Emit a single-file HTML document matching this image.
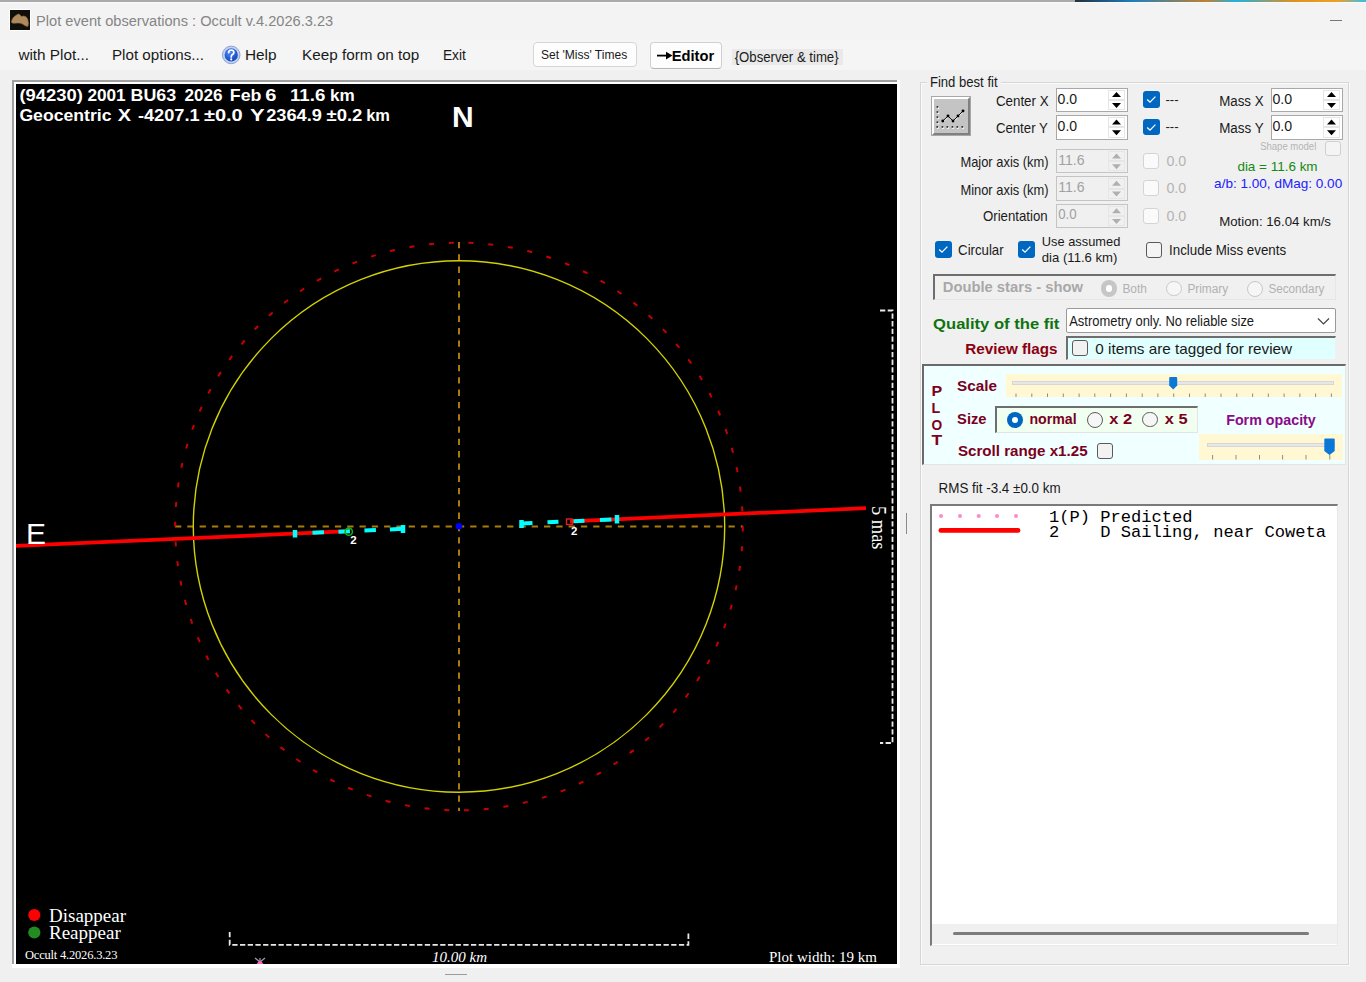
<!DOCTYPE html>
<html><head><meta charset="utf-8">
<style>
html,body{margin:0;padding:0;}
body{width:1366px;height:982px;overflow:hidden;position:relative;background:#f0f0f0;font-family:"Liberation Sans",sans-serif;color:#000;}
.a{position:absolute;}
</style></head><body>
<div class="a" style="left:0px;top:0px;width:1366px;height:40px;background:#f3f3f3;"></div>
<div class="a" style="left:0px;top:0px;width:1075px;height:1.5px;background:#aaaaaa;"></div>
<div class="a" style="left:0px;top:1.5px;width:1366px;height:1.0px;background:#fafafa;"></div>
<div class="a" style="left:1075px;top:0px;width:291px;height:2px;background:linear-gradient(90deg,#203040,#1f7fc0 20%,#c08030 45%,#20b0e0 55%,#e09020 75%,#f0a020 90%,#30c0f0);"></div>
<div class="a" style="left:9px;top:9px;width:22px;height:22px;background:#fff;"></div>
<div class="a" style="left:10px;top:10px;width:20px;height:20px;background:#100e0a;"></div>
<svg class="a" style="left:10px;top:10px" width="20" height="20"><path d="M1.3 11.5 L3 7.8 L5.7 5.4 L8.4 4 L10 4.8 L11.2 6.6 L13.3 6 L15.8 6.6 L17.6 8.8 L18.5 13.3 L17.9 16.4 L15.8 16.1 L13.3 14.6 L10.9 13.3 L7.8 13 L4.2 13.3 L2 13Z" fill="#ad895c" stroke="#8a6a45" stroke-width="0.6" stroke-linejoin="round"/></svg>
<div class="a" style="left:1330px;top:20px;width:12px;height:1px;background:#777;"></div>
<div class="a" style="left:0px;top:40px;width:1366px;height:30px;background:#f5f5f5;"></div>
<svg class="a" style="left:221px;top:45px" width="20" height="20"><defs><radialGradient id="hg" cx="0.4" cy="0.3" r="0.8"><stop offset="0" stop-color="#4d8dff"/><stop offset="1" stop-color="#0a3cb0"/></radialGradient></defs><circle cx="10.2" cy="9.9" r="8.8" fill="#c4d0ee" stroke="#8ea4d6" stroke-width="1"/><circle cx="10.2" cy="9.9" r="6.6" fill="url(#hg)"/><path d="M7.6 7.6 Q7.8 5 10.3 5 Q12.9 5.1 12.9 7.4 Q12.9 8.8 11.2 9.8 Q10.2 10.5 10.2 12" stroke="#fff" stroke-width="1.7" fill="none" stroke-linecap="round"/><circle cx="10.2" cy="14.4" r="1.05" fill="#fff"/></svg>
<div class="a" style="left:533px;top:42px;width:104px;height:24.5px;box-sizing:border-box;background:#fdfdfd;border:1px solid #d6d6d6;border-radius:4px;"></div>
<div class="a" style="left:649.5px;top:41.5px;width:72.5px;height:27.5px;box-sizing:border-box;background:#fdfdfd;border:1px solid #d0d0d0;border-bottom-color:#b4b4b4;border-radius:4px;"></div>
<div class="a" style="left:731.5px;top:49px;width:111.5px;height:15.599999999999994px;background:#e9e9e9;"></div>
<svg class="a" style="left:655px;top:49px" width="20" height="14"><path d="M2 6.6 H15" stroke="#000" stroke-width="1.8"/><path d="M11 2.8 L17.5 6.6 L11 10.4Z" fill="#000"/></svg>
<div class="a" style="left:12px;top:80px;width:888px;height:887.5px;background:#fff;"></div>
<div class="a" style="left:12px;top:80px;width:885px;height:884px;background:#a0a0a0;"></div>
<div class="a" style="left:14px;top:82px;width:883px;height:882px;background:#fff;"></div>
<div class="a" style="left:16px;top:84px;width:881px;height:880px;background:#000;"></div>
<svg class="a" style="left:16px;top:84px;" width="881" height="880" viewBox="16 84 881 880">
<g fill="none">
<!-- crosshair -->
<line x1="175" y1="526.5" x2="743" y2="526.5" stroke="#aa7a0c" stroke-width="2" stroke-dasharray="6.3 6"/>
<line x1="459" y1="242" x2="459" y2="811" stroke="#aa7a0c" stroke-width="2" stroke-dasharray="6.3 6"/>
<!-- yellow circle -->
<circle cx="459" cy="526.5" r="265.7" stroke="#d2d200" stroke-width="1.4"/>
<!-- red dashed circle -->
<circle cx="459" cy="526.5" r="283.8" stroke="#c80000" stroke-width="2" stroke-dasharray="5 14.8"/>
<!-- chord red -->
<line x1="15" y1="546" x2="349" y2="531.2" stroke="#ff0000" stroke-width="3.7"/>
<line x1="570" y1="521.3" x2="866" y2="508.2" stroke="#ff0000" stroke-width="3.7"/>
<!-- cyan error dashes left -->
<line x1="295" y1="533.6" x2="404" y2="528.8" stroke="#00ffff" stroke-width="4" stroke-dasharray="0 17.5 11.5 14.5 11.5 14.5 11.5 14 13"/>
<line x1="295" y1="530" x2="295" y2="537.5" stroke="#00ffff" stroke-width="4.5"/>
<line x1="403" y1="525" x2="403" y2="533" stroke="#00ffff" stroke-width="4.5"/>
<!-- cyan right -->
<line x1="521" y1="523.5" x2="617" y2="519.3" stroke="#00ffff" stroke-width="4" stroke-dasharray="11.5 15 11 15 11 15.5 11.5 20"/>
<line x1="521.5" y1="520" x2="521.5" y2="528" stroke="#00ffff" stroke-width="4.5"/>
<line x1="617" y1="515" x2="617" y2="523.5" stroke="#00ffff" stroke-width="4.5"/>
<!-- markers -->
<circle cx="348.8" cy="531.7" r="3.6" stroke="#10b010" stroke-width="1.6"/>
<rect x="566.5" y="519" width="6" height="5.5" stroke="#e02020" stroke-width="1.4"/>
<circle cx="459" cy="526.3" r="3.3" fill="#0000ff"/>
<!-- right scale bar -->
<path d="M880 310.5 H892.5 V743 H880" stroke="#e8e8e8" stroke-width="1.8" stroke-dasharray="5.3 2.4"/>
<!-- bottom scale bar -->
<path d="M229.7 932 V944.8 H688.4 V932" stroke="#e8e8e8" stroke-width="1.8" stroke-dasharray="5.3 2.4"/>
<!-- legend dots -->
<circle cx="34.3" cy="915" r="6.1" fill="#ff0000"/>
<circle cx="34.3" cy="932.5" r="6.1" fill="#228b22"/>
<!-- pink star -->
<g stroke="#a0a0b0" stroke-width="1.2"><line x1="255" y1="958" x2="265" y2="966"/><line x1="265" y1="958" x2="255" y2="966"/><line x1="260" y1="958" x2="260" y2="966"/></g>
<circle cx="260" cy="963.5" r="2.5" fill="#ff60c0"/>
</g>
<g fill="#fff" font-family="Liberation Sans" style="white-space:pre">
<text x="19.4" y="101" font-size="16.5" font-weight="bold" textLength="63.5" lengthAdjust="spacingAndGlyphs">(94230)</text>
<text x="87.4" y="101" font-size="16.5" font-weight="bold" textLength="38.3" lengthAdjust="spacingAndGlyphs">2001</text>
<text x="130.5" y="101" font-size="16.5" font-weight="bold" textLength="45.7" lengthAdjust="spacingAndGlyphs">BU63</text>
<text x="184.4" y="101" font-size="16.5" font-weight="bold" textLength="38.2" lengthAdjust="spacingAndGlyphs">2026</text>
<text x="229.8" y="101" font-size="16.5" font-weight="bold" textLength="31.6" lengthAdjust="spacingAndGlyphs">Feb</text>
<text x="265.2" y="101" font-size="16.5" font-weight="bold" textLength="11.2" lengthAdjust="spacingAndGlyphs">6</text>
<text x="290.0" y="101" font-size="16.5" font-weight="bold" textLength="35.3" lengthAdjust="spacingAndGlyphs">11.6</text>
<text x="330.0" y="101" font-size="16.5" font-weight="bold" textLength="24.8" lengthAdjust="spacingAndGlyphs">km</text>
<text x="19.4" y="121" font-size="16.5" font-weight="bold" textLength="92.1" lengthAdjust="spacingAndGlyphs">Geocentric</text>
<text x="117.7" y="121" font-size="16.5" font-weight="bold" textLength="13.3" lengthAdjust="spacingAndGlyphs">X</text>
<text x="137.9" y="121" font-size="16.5" font-weight="bold" textLength="61.8" lengthAdjust="spacingAndGlyphs">-4207.1</text>
<text x="203.9" y="121" font-size="16.5" font-weight="bold" textLength="38.9" lengthAdjust="spacingAndGlyphs">±0.0</text>
<text x="250.0" y="121" font-size="16.5" font-weight="bold" textLength="14.7" lengthAdjust="spacingAndGlyphs">Y</text>
<text x="266.2" y="121" font-size="16.5" font-weight="bold" textLength="55.7" lengthAdjust="spacingAndGlyphs">2364.9</text>
<text x="326.5" y="121" font-size="16.5" font-weight="bold" textLength="35.9" lengthAdjust="spacingAndGlyphs">±0.2</text>
<text x="366.2" y="121" font-size="16.5" font-weight="bold" textLength="23.8" lengthAdjust="spacingAndGlyphs">km</text>
<text x="452" y="126.5" font-size="30" font-weight="bold">N</text>
<text x="26" y="544" font-size="30">E</text>
<text x="350.3" y="544" font-size="11.5" font-weight="bold">2</text>
<text x="571" y="535" font-size="11.5" font-weight="bold">2</text>
</g>
<g fill="#fff" font-family="Liberation Serif" style="white-space:pre">
<text x="49" y="921.5" font-size="19">Disappear</text>
<text x="49" y="938.7" font-size="19">Reappear</text>
<text x="25" y="958.9" font-size="12.5" letter-spacing="-0.2">Occult 4.2026.3.23</text>
<text x="432" y="961.7" font-size="15" font-style="italic">10.00 km</text>
<text x="769" y="961.5" font-size="15">Plot width: 19 km</text>
<text transform="translate(872.4 506) rotate(90)" font-size="20.5" textLength="43.5" lengthAdjust="spacingAndGlyphs">5 mas</text>
</g>
</svg>

<div class="a" style="left:906px;top:513px;width:1px;height:20.5px;background:#8a8a8a;"></div>
<div class="a" style="left:445px;top:974px;width:21.5px;height:1px;background:#9a9a9a;"></div>
<div class="a" style="left:920px;top:82px;width:429px;height:883px;box-sizing:border-box;border:1px solid #d6d6d6;box-shadow:inset 1px 1px 0 #fafafa, 1px 1px 0 #fafafa;"></div>
<div class="a" style="left:927px;top:74px;width:74px;height:16px;background:#f0f0f0;"></div>
<div class="a" style="left:930.5px;top:96px;width:40.0px;height:40px;background:#a8a8a8;"></div>
<div class="a" style="left:931.5px;top:97px;width:38.0px;height:38px;box-sizing:border-box;background:#c4c4c4;border-top:2.5px solid #fff;border-left:2.5px solid #fff;border-right:2.5px solid #808080;border-bottom:2.5px solid #808080;"></div>
<svg class="a" style="left:930px;top:96px" width="40" height="40"><g fill="#fff"><rect x="7.6" y="11.299999999999999" width="1.6" height="1.6"/><rect x="7.6" y="16.400000000000002" width="1.6" height="1.6"/><rect x="7.6" y="21.5" width="1.6" height="1.6"/><rect x="7.6" y="26.6" width="1.6" height="1.6"/><rect x="7.0" y="31.3" width="1.6" height="1.6"/><rect x="12.2" y="31.3" width="1.6" height="1.6"/><rect x="17.1" y="31.3" width="1.6" height="1.6"/><rect x="22.200000000000003" y="31.3" width="1.6" height="1.6"/><rect x="27.1" y="31.3" width="1.6" height="1.6"/><rect x="32.1" y="31.3" width="1.6" height="1.6"/></g><g fill="#222"><rect x="6.6" y="10.1" width="1.6" height="1.6"/><rect x="6.6" y="15.200000000000001" width="1.6" height="1.6"/><rect x="6.6" y="20.299999999999997" width="1.6" height="1.6"/><rect x="6.6" y="25.4" width="1.6" height="1.6"/><rect x="6.4" y="30.1" width="1.6" height="1.6"/><rect x="11.6" y="30.1" width="1.6" height="1.6"/><rect x="16.5" y="30.1" width="1.6" height="1.6"/><rect x="21.6" y="30.1" width="1.6" height="1.6"/><rect x="26.5" y="30.1" width="1.6" height="1.6"/><rect x="31.5" y="30.1" width="1.6" height="1.6"/></g><path d="M13.3 25.8 L18.5 20.8 L23.5 25.8 L28.5 20.8 L33.5 15.8" stroke="#fff" stroke-width="1" fill="none" opacity="0.7"/><path d="M12.8 25 L18 20 L23 25 L28 20 L33 15" stroke="#111" stroke-width="1" fill="none"/><g fill="#000"><circle cx="12.8" cy="25" r="1.45"/><circle cx="18" cy="20" r="1.45"/><circle cx="23" cy="25" r="1.45"/><circle cx="28" cy="20" r="1.45"/><circle cx="33" cy="15" r="1.45"/></g></svg>
<div class="a" style="left:1055.5px;top:87.5px;width:72.5px;height:24.799999999999997px;box-sizing:border-box;border:1px solid #a8a8a8;background:#fff;"></div><div class="a" style="left:1108px;top:89.5px;width:17px;height:10.400000000000006px;box-sizing:border-box;border:1px solid #e6e6e6;background:#fff;"></div><div class="a" style="left:1108px;top:99.9px;width:17px;height:10.399999999999991px;box-sizing:border-box;border:1px solid #e6e6e6;background:#fff;"></div><svg class="a" style="left:0;top:0" width="1366" height="982"><path d="M1112.0 96.9 L1116.5 91.9 L1121.0 96.9Z M1112.0 102.9 L1116.5 107.9 L1121.0 102.9Z" fill="#000"/></svg>
<div class="a" style="left:1055.5px;top:115px;width:72.5px;height:24.69999999999999px;box-sizing:border-box;border:1px solid #a8a8a8;background:#fff;"></div><div class="a" style="left:1108px;top:117px;width:17px;height:10.349999999999994px;box-sizing:border-box;border:1px solid #e6e6e6;background:#fff;"></div><div class="a" style="left:1108px;top:127.35px;width:17px;height:10.349999999999994px;box-sizing:border-box;border:1px solid #e6e6e6;background:#fff;"></div><svg class="a" style="left:0;top:0" width="1366" height="982"><path d="M1112.0 124.4 L1116.5 119.4 L1121.0 124.4Z M1112.0 130.3 L1116.5 135.3 L1121.0 130.3Z" fill="#000"/></svg>
<div class="a" style="left:1270.5px;top:87.5px;width:72.5px;height:24.799999999999997px;box-sizing:border-box;border:1px solid #a8a8a8;background:#fff;"></div><div class="a" style="left:1323px;top:89.5px;width:17px;height:10.400000000000006px;box-sizing:border-box;border:1px solid #e6e6e6;background:#fff;"></div><div class="a" style="left:1323px;top:99.9px;width:17px;height:10.399999999999991px;box-sizing:border-box;border:1px solid #e6e6e6;background:#fff;"></div><svg class="a" style="left:0;top:0" width="1366" height="982"><path d="M1327.0 96.9 L1331.5 91.9 L1336.0 96.9Z M1327.0 102.9 L1331.5 107.9 L1336.0 102.9Z" fill="#000"/></svg>
<div class="a" style="left:1270.5px;top:115px;width:72.5px;height:24.69999999999999px;box-sizing:border-box;border:1px solid #a8a8a8;background:#fff;"></div><div class="a" style="left:1323px;top:117px;width:17px;height:10.349999999999994px;box-sizing:border-box;border:1px solid #e6e6e6;background:#fff;"></div><div class="a" style="left:1323px;top:127.35px;width:17px;height:10.349999999999994px;box-sizing:border-box;border:1px solid #e6e6e6;background:#fff;"></div><svg class="a" style="left:0;top:0" width="1366" height="982"><path d="M1327.0 124.4 L1331.5 119.4 L1336.0 124.4Z M1327.0 130.3 L1331.5 135.3 L1336.0 130.3Z" fill="#000"/></svg>
<div class="a" style="left:1055.5px;top:149.2px;width:72.5px;height:24.30000000000001px;box-sizing:border-box;border:1px solid #c4c4c4;background:#f0f0f0;"></div><div class="a" style="left:1108px;top:151.2px;width:17px;height:10.150000000000006px;box-sizing:border-box;border:1px solid #e6e6e6;background:#f0f0f0;"></div><div class="a" style="left:1108px;top:161.35px;width:17px;height:10.150000000000006px;box-sizing:border-box;border:1px solid #e6e6e6;background:#f0f0f0;"></div><svg class="a" style="left:0;top:0" width="1366" height="982"><path d="M1112.0 158.5 L1116.5 153.5 L1121.0 158.5Z M1112.0 164.2 L1116.5 169.2 L1121.0 164.2Z" fill="#b0b0b0"/></svg>
<div class="a" style="left:1055.5px;top:176.4px;width:72.5px;height:24.299999999999983px;box-sizing:border-box;border:1px solid #c4c4c4;background:#f0f0f0;"></div><div class="a" style="left:1108px;top:178.4px;width:17px;height:10.150000000000006px;box-sizing:border-box;border:1px solid #e6e6e6;background:#f0f0f0;"></div><div class="a" style="left:1108px;top:188.55px;width:17px;height:10.149999999999977px;box-sizing:border-box;border:1px solid #e6e6e6;background:#f0f0f0;"></div><svg class="a" style="left:0;top:0" width="1366" height="982"><path d="M1112.0 185.7 L1116.5 180.7 L1121.0 185.7Z M1112.0 191.4 L1116.5 196.4 L1121.0 191.4Z" fill="#b0b0b0"/></svg>
<div class="a" style="left:1055.5px;top:204px;width:72.5px;height:24.400000000000006px;box-sizing:border-box;border:1px solid #c4c4c4;background:#f0f0f0;"></div><div class="a" style="left:1108px;top:206px;width:17px;height:10.199999999999989px;box-sizing:border-box;border:1px solid #e6e6e6;background:#f0f0f0;"></div><div class="a" style="left:1108px;top:216.2px;width:17px;height:10.200000000000017px;box-sizing:border-box;border:1px solid #e6e6e6;background:#f0f0f0;"></div><svg class="a" style="left:0;top:0" width="1366" height="982"><path d="M1112.0 213.3 L1116.5 208.3 L1121.0 213.3Z M1112.0 219.1 L1116.5 224.1 L1121.0 219.1Z" fill="#b0b0b0"/></svg>
<div class="a" style="left:1143px;top:91.2px;width:16.5px;height:16.5px;background:#0067c0;border-radius:3px;"></div><svg class="a" style="left:1143px;top:91.2px" width="16.5" height="16.5"><path d="M4.2 8.6 L7 11.2 L12.4 5.6" stroke="#fff" stroke-width="1.3" fill="none"/></svg>
<div class="a" style="left:1143px;top:118.5px;width:16.5px;height:16.5px;background:#0067c0;border-radius:3px;"></div><svg class="a" style="left:1143px;top:118.5px" width="16.5" height="16.5"><path d="M4.2 8.6 L7 11.2 L12.4 5.6" stroke="#fff" stroke-width="1.3" fill="none"/></svg>
<div class="a" style="left:1325px;top:140.8px;width:15.5px;height:15.5px;box-sizing:border-box;border:1px solid #d0d0d0;background:#f4f4f4;border-radius:3px;"></div>
<div class="a" style="left:1143px;top:152.9px;width:15.700000000000045px;height:15.699999999999989px;box-sizing:border-box;border:1px solid #d4d4d4;background:#fafafa;border-radius:3px;"></div>
<div class="a" style="left:1143px;top:180.4px;width:15.700000000000045px;height:15.699999999999989px;box-sizing:border-box;border:1px solid #d4d4d4;background:#fafafa;border-radius:3px;"></div>
<div class="a" style="left:1143px;top:208.2px;width:15.700000000000045px;height:15.699999999999989px;box-sizing:border-box;border:1px solid #d4d4d4;background:#fafafa;border-radius:3px;"></div>
<div class="a" style="left:935.3px;top:241px;width:16.5px;height:16.5px;background:#0067c0;border-radius:3px;"></div><svg class="a" style="left:935.3px;top:241px" width="16.5" height="16.5"><path d="M4.2 8.6 L7 11.2 L12.4 5.6" stroke="#fff" stroke-width="1.3" fill="none"/></svg>
<div class="a" style="left:1018px;top:241px;width:16.5px;height:16.5px;background:#0067c0;border-radius:3px;"></div><svg class="a" style="left:1018px;top:241px" width="16.5" height="16.5"><path d="M4.2 8.6 L7 11.2 L12.4 5.6" stroke="#fff" stroke-width="1.3" fill="none"/></svg>
<div class="a" style="left:1145.5px;top:241.5px;width:16.0px;height:16.0px;box-sizing:border-box;border:1px solid #5a5a5a;background:#f4f4f4;border-radius:3px;"></div>
<div class="a" style="left:933px;top:274px;width:403px;height:26px;box-sizing:border-box;border-top:2px solid #6e6e6e;border-left:2px solid #6e6e6e;border-right:1px solid #e6e6e6;border-bottom:1px solid #e6e6e6;background:#f0f0f0;"></div>
<div class="a" style="left:1100.7px;top:280.35px;width:16.299999999999955px;height:16.30000000000001px;box-sizing:border-box;border-radius:50%;background:#c6c6c6;"></div><div class="a" style="left:1105.7px;top:285.35px;width:6.2999999999999545px;height:6.300000000000011px;border-radius:50%;background:#fff;"></div>
<div class="a" style="left:1166px;top:280.65px;width:15.700000000000045px;height:15.699999999999989px;box-sizing:border-box;border-radius:50%;border:1px solid #c8c8c8;background:#f6f6f6;"></div>
<div class="a" style="left:1247px;top:280.5px;width:16px;height:16.0px;box-sizing:border-box;border-radius:50%;border:1px solid #c8c8c8;background:#f6f6f6;"></div>
<div class="a" style="left:1065.8px;top:308.2px;width:270.70000000000005px;height:24.80000000000001px;box-sizing:border-box;background:#fff;border:1px solid #9a9a9a;border-radius:2px;"></div>
<svg class="a" style="left:1316px;top:314px" width="16" height="14"><path d="M2 4.5 L7.5 10 L13 4.5" stroke="#444" stroke-width="1.2" fill="none"/></svg>
<div class="a" style="left:1066px;top:335.6px;width:270px;height:24.0px;box-sizing:border-box;border-top:2px solid #6e6e6e;border-left:2px solid #6e6e6e;border-right:1px solid #f0f0f0;border-bottom:1px solid #f0f0f0;background:#e0ffff;"></div>
<div class="a" style="left:1072.2px;top:340.4px;width:15.599999999999909px;height:15.600000000000023px;box-sizing:border-box;border:1px solid #5a5a5a;background:#f2f2f2;border-radius:3px;"></div>
<div class="a" style="left:922px;top:363.5px;width:424px;height:101.30000000000001px;box-sizing:border-box;border-top:2px solid #6a6a6a;border-left:2px solid #6a6a6a;border-right:1px solid #e4e4e4;border-bottom:1px solid #e4e4e4;background:#f0ffff;"></div>
<div class="a" style="left:1006px;top:374.2px;width:336.20000000000005px;height:23.19999999999999px;background:#fff8d2;"></div><div class="a" style="left:1012px;top:381px;width:322px;height:4px;box-sizing:border-box;border:1px solid #d6d6d6;background:#e7e7e7;"></div><svg class="a" style="left:0;top:0" width="1366" height="982"><line x1="1016.0" y1="393.5" x2="1016.0" y2="397" stroke="#8c8c8c" stroke-width="1"/><line x1="1031.8" y1="393.5" x2="1031.8" y2="397" stroke="#8c8c8c" stroke-width="1"/><line x1="1047.5" y1="393.5" x2="1047.5" y2="397" stroke="#8c8c8c" stroke-width="1"/><line x1="1063.3" y1="393.5" x2="1063.3" y2="397" stroke="#8c8c8c" stroke-width="1"/><line x1="1079.1" y1="393.5" x2="1079.1" y2="397" stroke="#8c8c8c" stroke-width="1"/><line x1="1094.8" y1="393.5" x2="1094.8" y2="397" stroke="#8c8c8c" stroke-width="1"/><line x1="1110.6" y1="393.5" x2="1110.6" y2="397" stroke="#8c8c8c" stroke-width="1"/><line x1="1126.4" y1="393.5" x2="1126.4" y2="397" stroke="#8c8c8c" stroke-width="1"/><line x1="1142.2" y1="393.5" x2="1142.2" y2="397" stroke="#8c8c8c" stroke-width="1"/><line x1="1157.9" y1="393.5" x2="1157.9" y2="397" stroke="#8c8c8c" stroke-width="1"/><line x1="1173.7" y1="393.5" x2="1173.7" y2="397" stroke="#8c8c8c" stroke-width="1"/><line x1="1189.5" y1="393.5" x2="1189.5" y2="397" stroke="#8c8c8c" stroke-width="1"/><line x1="1205.2" y1="393.5" x2="1205.2" y2="397" stroke="#8c8c8c" stroke-width="1"/><line x1="1221.0" y1="393.5" x2="1221.0" y2="397" stroke="#8c8c8c" stroke-width="1"/><line x1="1236.8" y1="393.5" x2="1236.8" y2="397" stroke="#8c8c8c" stroke-width="1"/><line x1="1252.6" y1="393.5" x2="1252.6" y2="397" stroke="#8c8c8c" stroke-width="1"/><line x1="1268.3" y1="393.5" x2="1268.3" y2="397" stroke="#8c8c8c" stroke-width="1"/><line x1="1284.1" y1="393.5" x2="1284.1" y2="397" stroke="#8c8c8c" stroke-width="1"/><line x1="1299.9" y1="393.5" x2="1299.9" y2="397" stroke="#8c8c8c" stroke-width="1"/><line x1="1315.6" y1="393.5" x2="1315.6" y2="397" stroke="#8c8c8c" stroke-width="1"/><line x1="1331.4" y1="393.5" x2="1331.4" y2="397" stroke="#8c8c8c" stroke-width="1"/><path d="M1169.2 378.0 Q1169.2 377.0 1170.2 377.0 H1176.2 Q1177.2 377.0 1177.2 378.0 V385.6 L1173.2 389.6 L1169.2 385.6Z" fill="#0a78d6"/></svg>
<div class="a" style="left:994.7px;top:405.9px;width:203.0px;height:27.400000000000034px;box-sizing:border-box;border-top:2px solid #6e6e6e;border-left:2px solid #6e6e6e;border-right:1px solid #e4e4e4;border-bottom:1px solid #e4e4e4;background:#f0fff0;"></div>
<div class="a" style="left:1006.8px;top:411.5px;width:16.200000000000045px;height:16.19999999999999px;box-sizing:border-box;border-radius:50%;background:#0067c0;"></div><div class="a" style="left:1011.8px;top:416.5px;width:6.2000000000000455px;height:6.199999999999989px;border-radius:50%;background:#fff;"></div>
<div class="a" style="left:1087px;top:411.6px;width:16px;height:16.0px;box-sizing:border-box;border-radius:50%;border:1px solid #5c5c5c;background:#f6f6f6;"></div>
<div class="a" style="left:1142px;top:411.70000000000005px;width:15.799999999999955px;height:15.800000000000011px;box-sizing:border-box;border-radius:50%;border:1px solid #5c5c5c;background:#f6f6f6;"></div>
<div class="a" style="left:1199px;top:434px;width:144.4000000000001px;height:26px;background:#fff8d2;"></div><div class="a" style="left:1207px;top:442.5px;width:128px;height:4.0px;box-sizing:border-box;border:1px solid #d6d6d6;background:#e7e7e7;"></div><svg class="a" style="left:0;top:0" width="1366" height="982"><line x1="1212.6" y1="455" x2="1212.6" y2="459.5" stroke="#8c8c8c" stroke-width="1"/><line x1="1236" y1="455" x2="1236" y2="459.5" stroke="#8c8c8c" stroke-width="1"/><line x1="1259.5" y1="455" x2="1259.5" y2="459.5" stroke="#8c8c8c" stroke-width="1"/><line x1="1282.6" y1="455" x2="1282.6" y2="459.5" stroke="#8c8c8c" stroke-width="1"/><line x1="1306" y1="455" x2="1306" y2="459.5" stroke="#8c8c8c" stroke-width="1"/><line x1="1329.8" y1="455" x2="1329.8" y2="459.5" stroke="#8c8c8c" stroke-width="1"/><path d="M1324.3 439.5 Q1324.3 438.5 1325.3 438.5 H1333.7 Q1334.7 438.5 1334.7 439.5 V450.9 L1329.5 454.9 L1324.3 450.9Z" fill="#0a78d6"/></svg>
<div class="a" style="left:1097px;top:443px;width:15.799999999999955px;height:15.800000000000011px;box-sizing:border-box;border:1px solid #5a5a5a;background:#f2f2f2;border-radius:3px;"></div>
<div class="a" style="left:929.5px;top:504px;width:408.5px;height:441.5px;box-sizing:border-box;border-top:2px solid #7a7a7a;border-left:2px solid #7a7a7a;border-right:1px solid #e8e8e8;border-bottom:1px solid #e8e8e8;background:#fff;"></div>
<div class="a" style="left:931.5px;top:923.6px;width:405.5px;height:20.899999999999977px;background:#f0f0f0;"></div>
<div class="a" style="left:953px;top:932.3px;width:355.5px;height:3.2000000000000455px;background:#7c7c7c;border-radius:1.5px;"></div>
<svg class="a" style="left:930px;top:504px" width="100" height="40"><circle cx="11" cy="11.9" r="2" fill="#ff88cc"/><circle cx="30" cy="11.9" r="2" fill="#ff88cc"/><circle cx="48.700000000000045" cy="11.9" r="2" fill="#ff88cc"/><circle cx="67" cy="11.9" r="2" fill="#ff88cc"/><circle cx="86" cy="11.9" r="2" fill="#ff88cc"/><line x1="10.9" y1="26.4" x2="88" y2="26.4" stroke="#ff0000" stroke-width="4.8" stroke-linecap="round"/></svg>
<svg class="a" style="left:0;top:0;" width="1366" height="982">
<text x="36.1" y="25.9" font-family="Liberation Sans" font-size="15.4" font-weight="normal" font-style="normal" fill="#858585" textLength="297.1" lengthAdjust="spacingAndGlyphs" style="white-space:pre">Plot event observations : Occult v.4.2026.3.23</text>
<text x="18.4" y="59.7" font-family="Liberation Sans" font-size="15" font-weight="normal" font-style="normal" fill="#1a1a1a" textLength="70.6" lengthAdjust="spacingAndGlyphs" style="white-space:pre">with Plot...</text>
<text x="112.0" y="59.7" font-family="Liberation Sans" font-size="15" font-weight="normal" font-style="normal" fill="#1a1a1a" textLength="91.9" lengthAdjust="spacingAndGlyphs" style="white-space:pre">Plot options...</text>
<text x="244.9" y="59.7" font-family="Liberation Sans" font-size="15" font-weight="normal" font-style="normal" fill="#1a1a1a" textLength="31.6" lengthAdjust="spacingAndGlyphs" style="white-space:pre">Help</text>
<text x="302.0" y="59.7" font-family="Liberation Sans" font-size="15" font-weight="normal" font-style="normal" fill="#1a1a1a" textLength="117.2" lengthAdjust="spacingAndGlyphs" style="white-space:pre">Keep form on top</text>
<text x="442.9" y="59.7" font-family="Liberation Sans" font-size="15" font-weight="normal" font-style="normal" fill="#1a1a1a" textLength="23.0" lengthAdjust="spacingAndGlyphs" style="white-space:pre">Exit</text>
<text x="541.0" y="58.9" font-family="Liberation Sans" font-size="12.8" font-weight="normal" font-style="normal" fill="#1a1a1a" textLength="86.2" lengthAdjust="spacingAndGlyphs" style="white-space:pre">Set 'Miss' Times</text>
<text x="671.7" y="60.9" font-family="Liberation Sans" font-size="15" font-weight="bold" font-style="normal" fill="#000" textLength="42.5" lengthAdjust="spacingAndGlyphs" style="white-space:pre">Editor</text>
<text x="734.7" y="62.1" font-family="Liberation Sans" font-size="14.5" font-weight="normal" font-style="normal" fill="#1a1a1a" textLength="103.9" lengthAdjust="spacingAndGlyphs" style="white-space:pre">{Observer &amp; time}</text>
<text x="929.9" y="87.3" font-family="Liberation Sans" font-size="13.8" font-weight="normal" font-style="normal" fill="#1a1a1a" textLength="67.7" lengthAdjust="spacingAndGlyphs" style="white-space:pre">Find best fit</text>
<text x="995.9" y="105.8" font-family="Liberation Sans" font-size="14.5" font-weight="normal" font-style="normal" fill="#1a1a1a" textLength="52.7" lengthAdjust="spacingAndGlyphs" style="white-space:pre">Center X</text>
<text x="995.9" y="133.2" font-family="Liberation Sans" font-size="14.5" font-weight="normal" font-style="normal" fill="#1a1a1a" textLength="51.9" lengthAdjust="spacingAndGlyphs" style="white-space:pre">Center Y</text>
<text x="1057.6" y="103.7" font-family="Liberation Sans" font-size="14.5" font-weight="normal" font-style="normal" fill="#1a1a1a" textLength="19.5" lengthAdjust="spacingAndGlyphs" style="white-space:pre">0.0</text>
<text x="1057.6" y="131.1" font-family="Liberation Sans" font-size="14.5" font-weight="normal" font-style="normal" fill="#1a1a1a" textLength="19.5" lengthAdjust="spacingAndGlyphs" style="white-space:pre">0.0</text>
<text x="1165.4" y="103.5" font-family="Liberation Sans" font-size="13" font-weight="normal" font-style="normal" fill="#1a1a1a" textLength="13.2" lengthAdjust="spacingAndGlyphs" style="white-space:pre">---</text>
<text x="1165.4" y="131" font-family="Liberation Sans" font-size="13" font-weight="normal" font-style="normal" fill="#1a1a1a" textLength="13.2" lengthAdjust="spacingAndGlyphs" style="white-space:pre">---</text>
<text x="1219.2" y="106.2" font-family="Liberation Sans" font-size="14" font-weight="normal" font-style="normal" fill="#1a1a1a" textLength="44.4" lengthAdjust="spacingAndGlyphs" style="white-space:pre">Mass X</text>
<text x="1219.2" y="133" font-family="Liberation Sans" font-size="14" font-weight="normal" font-style="normal" fill="#1a1a1a" textLength="44.4" lengthAdjust="spacingAndGlyphs" style="white-space:pre">Mass Y</text>
<text x="1272.4" y="103.6" font-family="Liberation Sans" font-size="14.5" font-weight="normal" font-style="normal" fill="#1a1a1a" textLength="19.7" lengthAdjust="spacingAndGlyphs" style="white-space:pre">0.0</text>
<text x="1272.4" y="131" font-family="Liberation Sans" font-size="14.5" font-weight="normal" font-style="normal" fill="#1a1a1a" textLength="19.7" lengthAdjust="spacingAndGlyphs" style="white-space:pre">0.0</text>
<text x="1260.2" y="150" font-family="Liberation Sans" font-size="10" font-weight="normal" font-style="normal" fill="#b4b4b4" textLength="56.1" lengthAdjust="spacingAndGlyphs" style="white-space:pre">Shape model</text>
<text x="960.4" y="167" font-family="Liberation Sans" font-size="14.5" font-weight="normal" font-style="normal" fill="#1a1a1a" textLength="88.2" lengthAdjust="spacingAndGlyphs" style="white-space:pre">Major axis (km)</text>
<text x="960.4" y="195" font-family="Liberation Sans" font-size="14.5" font-weight="normal" font-style="normal" fill="#1a1a1a" textLength="88.2" lengthAdjust="spacingAndGlyphs" style="white-space:pre">Minor axis (km)</text>
<text x="983.0" y="221.2" font-family="Liberation Sans" font-size="14.5" font-weight="normal" font-style="normal" fill="#1a1a1a" textLength="64.6" lengthAdjust="spacingAndGlyphs" style="white-space:pre">Orientation</text>
<text x="1058.2" y="164.6" font-family="Liberation Sans" font-size="14.5" font-weight="normal" font-style="normal" fill="#a0a0a0" textLength="26.4" lengthAdjust="spacingAndGlyphs" style="white-space:pre">11.6</text>
<text x="1058.2" y="191.7" font-family="Liberation Sans" font-size="14.5" font-weight="normal" font-style="normal" fill="#a0a0a0" textLength="26.4" lengthAdjust="spacingAndGlyphs" style="white-space:pre">11.6</text>
<text x="1058.2" y="219.1" font-family="Liberation Sans" font-size="14.5" font-weight="normal" font-style="normal" fill="#a0a0a0" textLength="18.4" lengthAdjust="spacingAndGlyphs" style="white-space:pre">0.0</text>
<text x="1166.4" y="165.8" font-family="Liberation Sans" font-size="14" font-weight="normal" font-style="normal" fill="#b4b4b4" textLength="19.8" lengthAdjust="spacingAndGlyphs" style="white-space:pre">0.0</text>
<text x="1166.4" y="193.3" font-family="Liberation Sans" font-size="14" font-weight="normal" font-style="normal" fill="#b4b4b4" textLength="19.8" lengthAdjust="spacingAndGlyphs" style="white-space:pre">0.0</text>
<text x="1166.4" y="221" font-family="Liberation Sans" font-size="14" font-weight="normal" font-style="normal" fill="#b4b4b4" textLength="19.8" lengthAdjust="spacingAndGlyphs" style="white-space:pre">0.0</text>
<text x="1237.4" y="171" font-family="Liberation Sans" font-size="13.5" font-weight="normal" font-style="normal" fill="#138a13" textLength="80.2" lengthAdjust="spacingAndGlyphs" style="white-space:pre">dia = 11.6 km</text>
<text x="1214.1" y="188.1" font-family="Liberation Sans" font-size="13.5" font-weight="normal" font-style="normal" fill="#2020ff" textLength="128.1" lengthAdjust="spacingAndGlyphs" style="white-space:pre">a/b: 1.00, dMag: 0.00</text>
<text x="1219.2" y="226.2" font-family="Liberation Sans" font-size="13.5" font-weight="normal" font-style="normal" fill="#1a1a1a" textLength="111.8" lengthAdjust="spacingAndGlyphs" style="white-space:pre">Motion: 16.04 km/s</text>
<text x="958.1" y="254.6" font-family="Liberation Sans" font-size="14.5" font-weight="normal" font-style="normal" fill="#1a1a1a" textLength="45.5" lengthAdjust="spacingAndGlyphs" style="white-space:pre">Circular</text>
<text x="1041.8" y="245.7" font-family="Liberation Sans" font-size="13" font-weight="normal" font-style="normal" fill="#1a1a1a" textLength="78.5" lengthAdjust="spacingAndGlyphs" style="white-space:pre">Use assumed</text>
<text x="1041.8" y="262" font-family="Liberation Sans" font-size="13" font-weight="normal" font-style="normal" fill="#1a1a1a" textLength="75.6" lengthAdjust="spacingAndGlyphs" style="white-space:pre">dia (11.6 km)</text>
<text x="1169.1" y="254.7" font-family="Liberation Sans" font-size="14.5" font-weight="normal" font-style="normal" fill="#1a1a1a" textLength="117.0" lengthAdjust="spacingAndGlyphs" style="white-space:pre">Include Miss events</text>
<text x="942.8" y="292.3" font-family="Liberation Sans" font-size="14.5" font-weight="bold" font-style="normal" fill="#a8a8a8" textLength="140.1" lengthAdjust="spacingAndGlyphs" style="white-space:pre">Double stars - show</text>
<text x="1122.4" y="293.4" font-family="Liberation Sans" font-size="12" font-weight="normal" font-style="normal" fill="#b0b0b0" textLength="24.5" lengthAdjust="spacingAndGlyphs" style="white-space:pre">Both</text>
<text x="1187.4" y="293.4" font-family="Liberation Sans" font-size="12" font-weight="normal" font-style="normal" fill="#b0b0b0" textLength="40.8" lengthAdjust="spacingAndGlyphs" style="white-space:pre">Primary</text>
<text x="1268.4" y="293.4" font-family="Liberation Sans" font-size="12" font-weight="normal" font-style="normal" fill="#b0b0b0" textLength="56.0" lengthAdjust="spacingAndGlyphs" style="white-space:pre">Secondary</text>
<text x="933.1" y="328.5" font-family="Liberation Sans" font-size="15" font-weight="bold" font-style="normal" fill="#0f730f" textLength="126.3" lengthAdjust="spacingAndGlyphs" style="white-space:pre">Quality of the fit</text>
<text x="1069.2" y="325.6" font-family="Liberation Sans" font-size="14" font-weight="normal" font-style="normal" fill="#1a1a1a" textLength="184.9" lengthAdjust="spacingAndGlyphs" style="white-space:pre">Astrometry only. No reliable size</text>
<text x="965.3" y="353.8" font-family="Liberation Sans" font-size="15" font-weight="bold" font-style="normal" fill="#8b0010" textLength="92.2" lengthAdjust="spacingAndGlyphs" style="white-space:pre">Review flags</text>
<text x="1095.3" y="353.8" font-family="Liberation Sans" font-size="14.5" font-weight="normal" font-style="normal" fill="#1a1a1a" textLength="196.8" lengthAdjust="spacingAndGlyphs" style="white-space:pre">0 items are tagged for review</text>
<text x="931.4" y="396" font-family="Liberation Sans" font-size="14.5" font-weight="bold" font-style="normal" fill="#800020" textLength="10.7" lengthAdjust="spacingAndGlyphs" style="white-space:pre">P</text>
<text x="931.4" y="413.4" font-family="Liberation Sans" font-size="14.5" font-weight="bold" font-style="normal" fill="#800020" textLength="8.7" lengthAdjust="spacingAndGlyphs" style="white-space:pre">L</text>
<text x="931.4" y="430" font-family="Liberation Sans" font-size="14.5" font-weight="bold" font-style="normal" fill="#800020" textLength="10.7" lengthAdjust="spacingAndGlyphs" style="white-space:pre">O</text>
<text x="931.4" y="445" font-family="Liberation Sans" font-size="14.5" font-weight="bold" font-style="normal" fill="#800020" textLength="10.7" lengthAdjust="spacingAndGlyphs" style="white-space:pre">T</text>
<text x="957.1" y="391" font-family="Liberation Sans" font-size="15" font-weight="bold" font-style="normal" fill="#7a0020" textLength="39.8" lengthAdjust="spacingAndGlyphs" style="white-space:pre">Scale</text>
<text x="957.1" y="423.6" font-family="Liberation Sans" font-size="15" font-weight="bold" font-style="normal" fill="#7a0020" textLength="29.4" lengthAdjust="spacingAndGlyphs" style="white-space:pre">Size</text>
<text x="1029.4" y="424.4" font-family="Liberation Sans" font-size="14.5" font-weight="bold" font-style="normal" fill="#7a0020" textLength="47.2" lengthAdjust="spacingAndGlyphs" style="white-space:pre">normal</text>
<text x="1109.3" y="424.4" font-family="Liberation Sans" font-size="14.5" font-weight="bold" font-style="normal" fill="#7a0020" textLength="22.9" lengthAdjust="spacingAndGlyphs" style="white-space:pre">x 2</text>
<text x="1164.8" y="424.4" font-family="Liberation Sans" font-size="14.5" font-weight="bold" font-style="normal" fill="#7a0020" textLength="22.8" lengthAdjust="spacingAndGlyphs" style="white-space:pre">x 5</text>
<text x="1226.2" y="424.8" font-family="Liberation Sans" font-size="14.5" font-weight="bold" font-style="normal" fill="#8a0a8a" textLength="89.6" lengthAdjust="spacingAndGlyphs" style="white-space:pre">Form opacity</text>
<text x="957.9" y="455.8" font-family="Liberation Sans" font-size="15" font-weight="bold" font-style="normal" fill="#7a0020" textLength="129.7" lengthAdjust="spacingAndGlyphs" style="white-space:pre">Scroll range x1.25</text>
<text x="938.6" y="492.5" font-family="Liberation Sans" font-size="14" font-weight="normal" font-style="normal" fill="#1a1a1a" textLength="122.0" lengthAdjust="spacingAndGlyphs" style="white-space:pre">RMS fit -3.4 ±0.0 km</text>
<text x="1049" y="521.9" font-family="Liberation Mono" font-size="17.1" fill="#000" style="white-space:pre">1(P) Predicted</text>
<text x="1049" y="536.8" font-family="Liberation Mono" font-size="17.1" fill="#000" style="white-space:pre">2    D Sailing, near Coweta</text>
</svg>
</body></html>
